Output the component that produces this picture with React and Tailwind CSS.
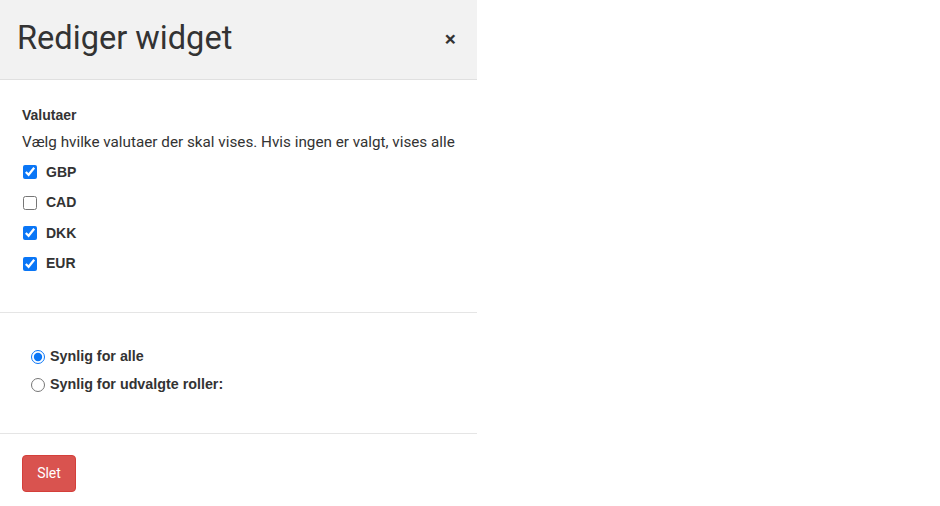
import React, { useState } from "react";

const currencies = [
  { code: "GBP", checked: true },
  { code: "CAD", checked: false },
  { code: "DKK", checked: true },
  { code: "EUR", checked: true },
];

const boldFont = "font-['Liberation_Sans',Arial,sans-serif] font-bold";

const EditWidget = () => {
  const [selected, setSelected] = useState(
    currencies.reduce((acc, c) => ({ ...acc, [c.code]: c.checked }), {})
  );
  const [visibility, setVisibility] = useState("all");

  return (
    <div className="w-[477px] min-h-[506px] bg-white text-[#333] font-['Roboto',sans-serif]">
      <div className="h-[80px] bg-[#f2f2f2] border-b border-[#e0e0e0] flex items-center justify-between pl-[17px] pr-[21px]">
        <h1 className="text-[32.6px] leading-none font-normal pb-[2px]">Rediger widget</h1>
        <button className="text-[21px] leading-none font-semibold text-[#333]">×</button>
      </div>

      <div className="px-[22px] pt-[25px] pb-[33px] border-b border-[#e5e5e5]">
        <div className={`text-[14px] leading-[20px] ${boldFont}`}>Valutaer</div>
        <p className="text-[15.25px] leading-[20px] mt-[7px]">
          Vælg hvilke valutaer der skal vises. Hvis ingen er valgt, vises alle
        </p>
        <div className="flex flex-col mt-[5px]">
          {currencies.map((c) => (
            <label key={c.code} className="flex items-center h-[30.5px] gap-[9px]">
              <input
                type="checkbox"
                checked={selected[c.code]}
                onChange={() => setSelected({ ...selected, [c.code]: !selected[c.code] })}
                className="w-[14px] h-[14px] m-0 ml-[1px] accent-[#0a76f6]"
              />
              <span className={`text-[14px] ${boldFont}`}>{c.code}</span>
            </label>
          ))}
        </div>
      </div>

      <div className="pl-[31px] pt-[30px] pb-[34px] border-b border-[#e5e5e5]">
        {[
          { id: "all", label: "Synlig for alle" },
          { id: "roles", label: "Synlig for udvalgte roller:" },
        ].map((r) => (
          <label key={r.id} className="flex items-center h-[28px] gap-[5px]">
            <input
              type="radio"
              name="visibility"
              checked={visibility === r.id}
              onChange={() => setVisibility(r.id)}
              className="w-[14px] h-[14px] m-0 accent-[#0a76f6]"
            />
            <span className={`text-[14.3px] ${boldFont}`}>{r.label}</span>
          </label>
        ))}
      </div>

      <div className="px-[22px] pt-[21px]">
        <button className="bg-[#d9534f] text-white text-[14px] rounded-[4px] w-[54px] h-[37px] border border-[#d43f3a]">
          Slet
        </button>
      </div>
    </div>
  );
};

export default function App() {
  return <EditWidget />;
}
